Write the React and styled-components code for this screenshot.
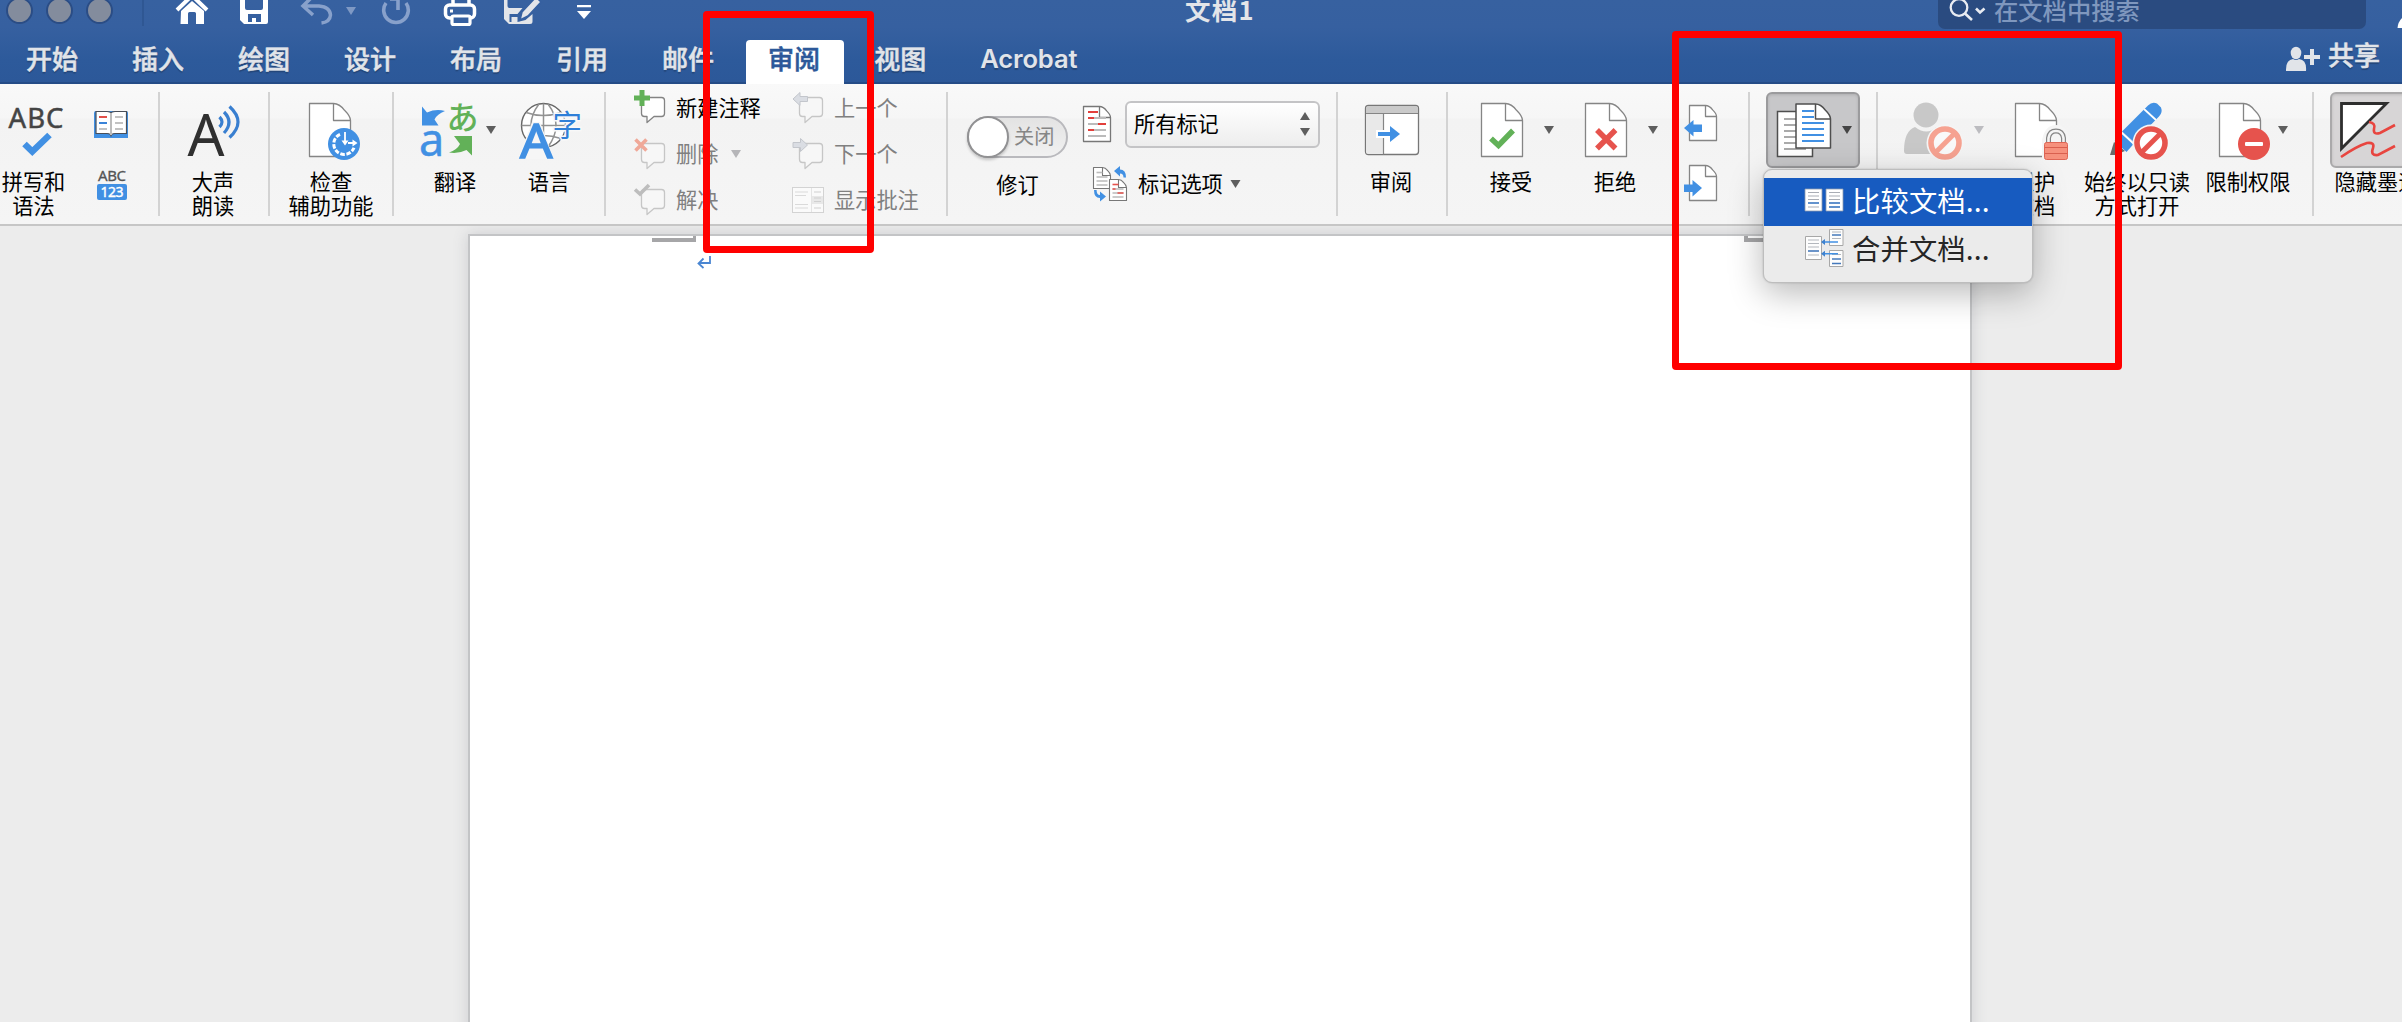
import React from "react";
import styled, { createGlobalStyle, css } from "styled-components";

const BLUE = "#4190e3";
const GREEN = "#62b158";
const RED = "#e6534d";

const GlobalStyle = createGlobalStyle`
  * { box-sizing: border-box; }
  html, body { margin: 0; padding: 0; }
  body {
    overflow: hidden;
    background: #ececec;
    font-family: "Noto Sans CJK SC", "Noto Sans", sans-serif;
    color: #000;
  }
`;

const Window = styled.div`
  position: relative;
  width: 2402px;
  height: 1022px;
  overflow: hidden;
  display: flex;
  flex-direction: column;
`;

const Header = styled.header`
  flex: none;
  height: 84px;
  background: linear-gradient(#3761a0 0, #3660a0 27px, #2d5a9b 60px, #2c5899 100%);
  border-bottom: 2px solid #254c87;
`;

const TitleBar = styled.div`
  display: flex;
  align-items: center;
  height: 36px;
  margin-top: -8px;
`;

const Lights = styled.div`
  display: flex;
  gap: 13px;
  padding-left: 6px;
  width: 142px;
`;

const Light = styled.span`
  width: 27px;
  height: 27px;
  border-radius: 50%;
  background: #838c9d;
  border: 2px solid #2b4d85;
`;

const TitleDivider = styled.span`
  width: 2px;
  height: 32px;
  background: #2f5793;
`;

const QuickAccess = styled.div`
  display: flex;
  width: 1041px;
`;

const Title = styled.h1`
  margin: 0;
  width: 753px;
  font-size: 25.5px;
  line-height: 36px;
  font-weight: 700;
  color: #e3e5e9;
  letter-spacing: 1.2px;
  transform: translateY(-1px);
`;

const Search = styled.div`
  display: flex;
  align-items: center;
  width: 428px;
  height: 37px;
  border-radius: 0 0 7px 7px;
  background: #2a4b80;
  color: #7f97be;
  font-size: 24.3px;
  line-height: 36px;
  font-weight: 500;
`;

const Svg = styled.svg`
  display: block;
  flex: none;
  overflow: visible;
`;

const TabBar = styled.nav`
  display: flex;
  align-items: flex-start;
  height: 54px;
  margin-left: -1px;
  padding-top: 12px;
`;

const Tab = styled.a`
  display: block;
  height: 44px;
  margin: 0 3px 0 5px;
  padding: 0 24px 0 22px;
  font-size: 26px;
  line-height: 35px;
  font-weight: 500;
  color: #e1e4e9;
  -webkit-text-stroke: 0.5px currentColor;
  text-shadow: 0 2px 1px rgba(0, 0, 0, 0.22);
  ${(p) => p.$latin && css`
    font-family: Inter, "Noto Sans", sans-serif;
    font-size: 25.5px;
    font-weight: 600;
    line-height: 38px;
    letter-spacing: -0.1px;
    -webkit-text-stroke: 0;
  `}
  ${(p) => p.$active && css`
    background: #fff;
    color: #2c5899;
    font-weight: 500;
    text-shadow: none;
    border-radius: 4px 4px 0 0;
  `}
`;

const Share = styled.button`
  display: flex;
  align-items: center;
  margin: -4px 22px 0 auto;
  padding: 0;
  border: 0;
  background: none;
  font: 500 26px/36px "Noto Sans CJK SC", sans-serif;
  color: #e1e4e9;
  -webkit-text-stroke: 0.5px currentColor;
  text-shadow: 0 2px 1px rgba(0, 0, 0, 0.22);
`;

const Ribbon = styled.section`
  position: relative;
  z-index: 2;
  flex: none;
  display: flex;
  height: 142px;
  background: linear-gradient(#f9f9f9 0, #f6f6f6 34px, #f3f3f3 35px, #f5f5f5 100%);
  border-bottom: 2px solid #c6c6c6;
`;

const Group = styled.div`
  position: relative;
  flex: none;
  display: flex;
  width: ${(p) => p.$w + 2}px;
  padding-top: ${(p) => p.$top ?? 8}px;
  padding-left: ${(p) => p.$left ?? 0}px;
  &::after {
    content: "";
    position: absolute;
    top: 8px;
    right: 0;
    width: 2px;
    height: 124px;
    background: ${(p) => (p.$last ? "none" : "#d3d3d3")};
  }
`;

const BigButton = styled.div`
  flex: none;
  display: flex;
  flex-direction: column;
  align-items: center;
  width: ${(p) => p.$w}px;
`;

const Label = styled.span`
  margin-top: -1px;
  font-size: 21.2px;
  line-height: 24px;
  text-align: center;
  white-space: pre;
  color: ${(p) => (p.$dim ? "#808080" : "#000")};
`;

const RowLabel = styled(Label)`
  margin-top: -2px;
`;

const Stack = styled.div`
  display: flex;
  flex-direction: column;
  padding-left: ${(p) => p.$left ?? 0}px;
  width: ${(p) => p.$w}px;
  gap: ${(p) => p.$gap ?? 0}px;
`;

const CommandRow = styled.div`
  display: flex;
  align-items: center;
  gap: ${(p) => p.$gap ?? 8}px;
  height: 46px;
`;

const TrackTop = styled(CommandRow)`
  margin: 9px 0 15px -7px;
`;

const TrackBottom = styled(CommandRow)`
  margin-top: -1px;
`;

const Pressed = styled.div`
  flex: none;
  width: 94px;
  height: 76px;
  border: 2px solid ${(p) => (p.$light ? "#aaa9aa" : "#9b9b9d")};
  border-radius: 6px;
  background: ${(p) => (p.$light ? "#d7d5d6" : "#c7c7c9")};
  box-shadow: inset 0 1px 3px rgba(0, 0, 0, 0.12);
`;

const PressedIcon = styled(Svg)`
  margin: -2px;
`;

const InkLabel = styled(Label)`
  margin-top: 1px;
`;

const Toggle = styled.div`
  display: flex;
  align-items: center;
  width: 101px;
  height: 42px;
  margin: 24px 0 15px;
  border: 2px solid #b9b9bd;
  border-radius: 21px;
  background: linear-gradient(#e3e3e3, #f1f1f1);
  font-size: 20.2px;
  line-height: 36px;
  color: #868686;
`;

const ToggleText = styled.span`
  margin-top: -2px;
`;

const Knob = styled.span`
  width: 42px;
  height: 42px;
  margin: 0 5px 0 -2px;
  border-radius: 50%;
  border: 2px solid #919193;
  background: #fff;
  box-shadow: 0 2px 3px rgba(0, 0, 0, 0.2);
`;

const Select = styled.div`
  display: flex;
  align-items: center;
  justify-content: space-between;
  width: 195px;
  height: 47px;
  padding: 0 5px 0 7px;
  border: 2px solid #c4c4c6;
  border-radius: 6px;
  background: linear-gradient(#fff, #ededed);
`;

const Menu = styled.div`
  position: absolute;
  z-index: 5;
  left: 13px;
  top: 85px;
  width: 270px;
  height: 114px;
  padding: 8px 0;
  border: 1px solid #bdbdbd;
  border-radius: 9px;
  background: #ebebeb;
  box-shadow: 0 10px 34px rgba(0, 0, 0, 0.28), 0 0 2px rgba(0, 0, 0, 0.2);
`;

const MenuItem = styled.div`
  display: flex;
  align-items: center;
  gap: 7px;
  height: 48px;
  padding-left: 40px;
  font-size: 28.3px;
  line-height: 44px;
  white-space: nowrap;
  color: ${(p) => (p.$active ? "#fff" : "#262626")};
  background: ${(p) => (p.$active ? "#175bc0" : "transparent")};
`;

const MenuText = styled.span`
  margin-top: -4px;
  letter-spacing: 0.15px;
`;

const Workspace = styled.main`
  flex: 1;
  display: flex;
  justify-content: center;
  padding: 8px 0 0 38px;
  background: #ececec;
`;

const Page = styled.article`
  width: 1504px;
  height: 820px;
  border: 2px solid #c3c4c6;
  background: #fff;
  box-shadow: 0 0 14px rgba(90, 96, 108, 0.22);
`;

const Highlight = styled.div`
  position: absolute;
  z-index: 10;
  left: ${(p) => p.$x}px;
  top: ${(p) => p.$y}px;
  width: ${(p) => p.$w}px;
  height: ${(p) => p.$h}px;
  border: 7px solid #f00;
  border-radius: 4px;
`;

/* Every drawing keeps one shared coordinate space: the viewBox names the region it covers. */
function Art({ x, y, w, h, as: Tag = Svg, children }) {
  return (
    <Tag width={w} height={h} viewBox={`${x} ${y} ${w} ${h}`} fill="none">
      {children}
    </Tag>
  );
}

const Down = ({ x, y, color = "#5e5e5e" }) => (
  <path d={`M${x} ${y}h10l-5 8z`} fill={color} />
);

const Sheet = ({ x, y, w, h, f, stroke = "#858585", sw = 1.3 }) => (
  <g stroke={stroke} strokeWidth={sw} strokeLinejoin="round">
    <path d={`M${x} ${y}h${w - f}q${f * 0.35} 0 ${f * 0.65} ${f * 0.4}q${f * 0.35} ${f * 0.35} ${f * 0.35} ${f * 0.6}v${h - f}h${-w}z`} fill="#fff" />
    <path d={`M${x + w - f} ${y}v${f}h${f}`} />
  </g>
);

const Bubble = ({ dx = 0, dy = 0, color = "#838383", fill = "#fff" }) => (
  <path
    transform={`translate(${dx} ${dy})`}
    d="M644.5 97.5h17q3 0 3 3v13q0 3-3 3h-7.5l-7 6v-6h-2.500q-3 0-3-3v-13q0-3 3-3z"
    fill={fill}
    stroke={color}
    strokeWidth="1.3"
    strokeLinejoin="round"
  />
);

const Lines = ({ x, w, ys, color = "#c2c2c2", sw = 1.6 }) => (
  <path d={ys.map((y) => `M${x} ${y}h${w}`).join("")} stroke={color} strokeWidth={sw} />
);

const Forbidden = ({ x, y, color, fill = "#fff", halo = "#f5f5f5" }) => (
  <g>
    <circle cx={x} cy={y} r="18.500" fill={halo} />
    <circle cx={x} cy={y} r="14" fill={fill} stroke={color} strokeWidth="5.600" />
    <path d={`M${x - 9} ${y + 9}l18-18`} stroke={color} strokeWidth="5" />
  </g>
);

const Big = ({ x, w, label, children }) => (
  <BigButton $w={w}>
    <Art x={x} y={92} w={w} h={78}>{children}</Art>
    {label && <Label>{label}</Label>}
  </BigButton>
);

const TABS = ["开始", "插入", "绘图", "设计", "布局", "引用", "邮件", "审阅", "视图", "Acrobat"];

function WindowHeader() {
  return (
    <Header>
      <TitleBar>
        <Lights><Light /><Light /><Light /></Lights>
        <TitleDivider />
        <QuickAccess>
          <Art x={144} y={-8} w={80} h={36}>
            <path d="M177 10L192-4.500L207 10" stroke="#fff" strokeWidth="4" />
            <path d="M181 11L192 1l12 10v13h-8V13.500q0-1.500-1.500-1.500h-5q-1.500 0-1.500 1.500V24h-7.500z" fill="#fff" />
          </Art>
          <Art x={224} y={-8} w={66} h={36}>
            <path d="M240-8h28V22q0 2-2 2h-22l-4-4zM245-8v16q0 2 2 2h14q2 0 2-2V-8zM248 14v8h4v-4h4v4h5v-8z" fill="#fff" fillRule="evenodd" />
          </Art>
          <Art x={290} y={-8} w={78} h={36}>
            <path d="M313-4L303 6l10 9M304 6h15q11 1 11.500 9q-.5 7-9 8" stroke="#88a1cb" strokeWidth="3.500" />
            <Down x={346} y={7} color="#7f99c4" />
          </Art>
          <Art x={368} y={-8} w={62} h={36}>
            <path d="M386 3a12.300 12.300 0 1 0 20 0M398-2V10M390-1h9" stroke="#88a1cb" strokeWidth="3.600" />
          </Art>
          <Art x={430} y={-8} w={62} h={36}>
            <path d="M453 4V-8M469 4V-8" stroke="#fff" strokeWidth="3.500" />
            <rect x="445.500" y="5" width="29" height="13" rx="4" stroke="#fff" strokeWidth="3.500" />
            <rect x="452" y="16" width="18" height="8.500" rx="1.500" fill="#3660a0" stroke="#fff" strokeWidth="3.200" />
            <rect x="450" y="9.500" width="3" height="3" fill="#fff" />
          </Art>
          <Art x={492} y={-8} w={70} h={36}>
            <path d="M504-8V19l5 5h21q2.500 0 2.500-2.500V14l-7 6-8 2V17h-6v5h-2v-8h8l5-6h-13q-2 0-2-2V-8z" fill="#e3e5e9" />
            <path d="M520 20l2-8L536-3l5 5-13 14z" fill="#e3e5e9" stroke="#3660a0" strokeWidth="1.500" />
          </Art>
          <Art x={562} y={-8} w={40} h={36}>
            <path d="M577 5h14v2.300h-14zM577 11h14l-7 8z" fill="#fff" />
          </Art>
        </QuickAccess>
        <Title>文档1</Title>
        <Search>
          <Art x={1938} y={-8} w={56} h={36}>
            <circle cx="1959" cy="7.500" r="8.300" stroke="#e8ebf1" strokeWidth="2.300" />
            <path d="M1965 13.500l7 6.500M1976 8.500l4 4 4.500-4" stroke="#e8ebf1" strokeWidth="2.600" />
          </Art>
          在文档中搜索
        </Search>
        <Art x={2366} y={-8} w={36} h={36}>
          <path d="M2402 18q-4 4-4.500 10h8z" fill="#fff" />
        </Art>
      </TitleBar>
      <TabBar>
        {TABS.map((t) => (
          <Tab key={t} $active={t === "审阅"} $latin={t === "Acrobat"}>{t}</Tab>
        ))}
        <Share>
          <Art x={2285} y={36} w={43} h={36}>
            <ellipse cx="2296" cy="53" rx="5.300" ry="6.200" fill="#e1e4e9" />
            <path d="M2286 71q-.5-11 7-12q3 2 6 0q8 1 7 12zM2310 49h4v6h6v4h-6v6h-4v-6h-6v-4h6z" fill="#e1e4e9" />
          </Art>
          共享
        </Share>
      </TabBar>
    </Header>
  );
}

function Proofing() {
  return (
    <Group $w={158}>
      <Big x={0} w={67} label={"拼写和\n语法"}>
        <text x="8.500" y="128" fontFamily="Noto Sans" fontSize="27.500" textLength="55" fill="#444" stroke="#444" strokeWidth=".5">ABC</text>
        <path d="M24.500 144l7.800 7.500L49.500 135" stroke={BLUE} strokeWidth="6.500" />
      </Big>
      <Stack $w={91} $left={23} $gap={18}>
        <Art x={90} y={92} w={44} h={50}>
          <path d="M94 113q0-2 2-2h30q2 0 2 2v25H94z" fill={BLUE} />
          <path d="M96 111.500h11q4 0 4 2.500q0-2.500 4-2.500h11.500v22H115q-4 0-4 3q0-3-4-3H96z" fill="#fff" stroke="#4a4f58" strokeWidth="1.200" />
          <path d="M111 113v22" stroke="#bcbcbc" strokeWidth="2" />
          <Lines x={99} w={8} ys={[117]} color="#e2504a" sw={2} />
          <Lines x={99} w={8} ys={[123]} color="#3a83d8" sw={2} />
          <Lines x={99} w={8} ys={[129]} sw={2} />
          <Lines x={115} w={8} ys={[117, 123, 129]} sw={2} />
        </Art>
        <Art x={90} y={160} w={44} h={50}>
          <text x="98" y="181" fontFamily="Noto Sans" fontSize="15" textLength="28" fill="#555" stroke="#555" strokeWidth=".3">ABC</text>
          <rect x="97" y="184" width="30" height="16" rx="2" fill={BLUE} />
          <text x="100.500" y="197.300" fontFamily="Noto Sans" fontSize="14" textLength="23" fill="#fff" stroke="#fff" strokeWidth=".4">123</text>
        </Art>
      </Stack>
    </Group>
  );
}

function Comments() {
  return (
    <Group $w={340} $top={1} $left={26}>
      <Stack $w={158}>
        <CommandRow>
          <Art x={632} y={85} w={36} h={46}>
            <Bubble />
            <path d="M634 95.500h5.500v-5.500h5v5.500h5.500v5h-5.500v5.500h-5v-5.500H634z" fill={GREEN} />
          </Art>
          <RowLabel>新建注释</RowLabel>
        </CommandRow>
        <CommandRow>
          <Art x={632} y={131} w={36} h={46}>
            <Bubble dy={46} color="#c6c6c6" fill="#f7f7f7" />
            <path d="M635.500 139.500l11 11M646.500 139.500l-11 11" stroke="#f0a898" strokeWidth="3.600" />
          </Art>
          <RowLabel $dim>删除</RowLabel>
          <Art x={726} y={131} w={16} h={46}><Down x={731} y={150} color="#b5b5b8" /></Art>
        </CommandRow>
        <CommandRow>
          <Art x={632} y={177} w={36} h={46}>
            <Bubble dy={92} color="#c6c6c6" fill="#f7f7f7" />
            <path d="M635 189.500l5 4.500 9-9" stroke="#bdbdbd" strokeWidth="3.600" />
          </Art>
          <RowLabel $dim>解决</RowLabel>
        </CommandRow>
      </Stack>
      <Stack $w={156}>
        <CommandRow>
          <Art x={790} y={85} w={36} h={46}>
            <Bubble dx={158} color="#c6c6c6" fill="#f7f7f7" />
            <path d="M793 99l7-6.500v4h7.500v5H800v4z" fill="#dadde3" stroke="#c3c6cc" />
          </Art>
          <RowLabel $dim>上一个</RowLabel>
        </CommandRow>
        <CommandRow>
          <Art x={790} y={131} w={36} h={46}>
            <Bubble dx={158} dy={46} color="#c6c6c6" fill="#f7f7f7" />
            <path d="M807.500 145l-7-6.500v4h-7.500v5h7.500v4z" fill="#dadde3" stroke="#c3c6cc" />
          </Art>
          <RowLabel $dim>下一个</RowLabel>
        </CommandRow>
        <CommandRow>
          <Art x={790} y={177} w={36} h={46}>
            <rect x="792.500" y="187.500" width="31" height="25" fill="#fafafa" stroke="#d3d3d3" />
            <rect x="811" y="196" width="12" height="8" fill="#e8e8e8" />
            <path d="M811.500 188v24" stroke="#e4e4e4" />
            <Lines x={795} w={13} ys={[192, 204.5, 208]} color="#dadada" sw={1} />
            <Lines x={795} w={11} ys={[195.5]} color="#dadada" sw={1} />
            <Lines x={814} w={7} ys={[192, 198, 201.5, 208]} color="#d0d0d0" sw={1} />
          </Art>
          <RowLabel $dim>显示批注</RowLabel>
        </CommandRow>
      </Stack>
    </Group>
  );
}

function MarkupSheet({ x, y, red }) {
  return (
    <g>
      <Sheet x={x} y={y} w={17} h={21} f={8} sw={1.1} stroke="#777" />
      <Lines x={x + 3} w={6} ys={[y + 5]} color={red ? RED : "#bbb"} />
      <Lines x={x + 3} w={11} ys={[y + 9.5, y + 13.5, y + 17.5]} color="#bbb" />
      {red && <path d={`M${x + 3} ${y + 9.5}h3M${x + 8} ${y + 13.5}h6`} stroke={RED} strokeWidth="1.600" />}
    </g>
  );
}

function Tracking() {
  return (
    <Group $w={388}>
      <BigButton $w={139}>
        <Toggle><Knob /><ToggleText>关闭</ToggleText></Toggle>
        <Label>修订</Label>
      </BigButton>
      <Stack $w={249}>
        <TrackTop $gap={9}>
          <Art x={1080} y={100} w={36} h={46}>
            <Sheet x={1083.5} y={105.5} w={27} h={35} f={11} stroke="#777" />
            <Lines x={1088} w={18} ys={[117, 123, 129, 135]} color="#bbb" sw={1.8} />
            <path d="M1088 111h10M1088 117h6M1098 123h8M1088 129h6" stroke="#e23f3b" strokeWidth="2" />
          </Art>
          <Select>
            <RowLabel>所有标记</RowLabel>
            <Art x={1299} y={108} w={16} h={32}>
              <path d="M1302 120h10l-5-8z" fill="#5e5e5e" />
              <Down x={1302} y={128} />
            </Art>
          </Select>
        </TrackTop>
        <TrackBottom $gap={7}>
          <Art x={1087} y={161} w={44} h={46}>
            <MarkupSheet x={1093.5} y={167.5} />
            <MarkupSheet x={1109.5} y={179.5} red />
            <path d="M1114 171l6-5v3.500q6 0 6 8h-2.500q0-4-3.500-4v3z" fill={BLUE} />
            <path d="M1094 190h2.600q0 5 3.400 5v-3.500l6 5-6 5v-3.500q-6 0-6-8z" fill={BLUE} />
          </Art>
          <RowLabel>标记选项</RowLabel>
          <Art x={1230} y={161} w={16} h={46}><Down x={1230.5} y={180} /></Art>
        </TrackBottom>
      </Stack>
    </Group>
  );
}

function Changes() {
  return (
    <Group $w={300}>
      <Big x={1448} w={126} label="接受">
        <Sheet x={1481.5} y={103.5} w={41} h={53} f={17} />
        <path d="M1491 138.500l7.500 7 14.500-15" stroke={GREEN} strokeWidth="5.500" />
        <Down x={1544} y={126} />
      </Big>
      <Big x={1574} w={82} label="拒绝">
        <Sheet x={1585.5} y={103.5} w={41} h={53} f={17} />
        <path d="M1597 130l18.500 18.500M1615.500 130L1597 148.500" stroke={RED} strokeWidth="5.500" />
        <Down x={1648} y={126} />
      </Big>
      <Stack $w={92} $left={24} $gap={10}>
        <Art x={1680} y={92} w={40} h={50}>
          <Sheet x={1689.5} y={105.5} w={27} h={35} f={11} />
          <path d="M1684 128l9.500-8v4.500h8.500v7.500h-8.500v4.500z" fill={BLUE} />
        </Art>
        <Art x={1680} y={152} w={40} h={50}>
          <Sheet x={1689.5} y={165.5} w={27} h={35} f={11} />
          <path d="M1702 188l-9.500-8v4.500h-8.500v7.500h8.500v4.500z" fill={BLUE} />
        </Art>
      </Stack>
    </Group>
  );
}

function Compare() {
  return (
    <Group $w={126} $left={16}>
      <Pressed>
        <Art as={PressedIcon} x={1766} y={92} w={94} h={76}>
          <path d="M1777.500 111.500h35v45h-35z" fill="#fff" stroke="#4f4f4f" strokeWidth="1.500" />
          <Lines x={1784} w={22} ys={[119, 125, 131, 137, 143, 149]} color="#8e8e8e" />
          <Sheet x={1796} y={104} w={34.5} h={44} f={15} stroke="#4f4f4f" sw={1.5} />
          <Lines x={1802} w={12} ys={[111, 117]} color={BLUE} sw={2} />
          <Lines x={1802} w={22} ys={[123, 129, 135, 141]} color={BLUE} sw={2} />
          <Down x={1842} y={126} color="#444" />
        </Art>
      </Pressed>
      <Menu>
        <MenuItem $active>
          <Art x={1804} y={178} w={41} h={48}>
            <path d="M1805 189h17v22h-17zM1826 189h17v22h-17z" fill="#fff" stroke="#8d99ad" strokeWidth=".8" />
            <Lines x={1808} w={11} ys={[192.5, 196, 199.5, 207]} color="#a9adb5" sw={1.2} />
            <Lines x={1829} w={11} ys={[192.5, 196, 199.5]} color="#a9adb5" sw={1.2} />
            <Lines x={1808} w={11} ys={[203]} color="#2f6fbd" sw={1.5} />
            <Lines x={1829} w={11} ys={[203, 207]} color="#2f6fbd" sw={1.5} />
          </Art>
          <MenuText>比较文档...</MenuText>
        </MenuItem>
        <MenuItem>
          <Art x={1804} y={226} w={41} h={48}>
            <path d="M1805.500 236.500h16v23h-16zM1829.500 229.500h13.500v16h-13.500zM1829.500 250.500h13.500v16h-13.500z" fill="#fdfdfd" stroke="#a7a7a7" />
            <Lines x={1808} w={11} ys={[240, 243.5, 247, 255]} color="#b3b7bd" sw={1.2} />
            <Lines x={1808} w={11} ys={[251]} color="#4579bb" sw={1.6} />
            <Lines x={1832} w={9} ys={[232, 238.5, 254.5]} color="#b3b7bd" sw={1.2} />
            <Lines x={1832} w={9} ys={[235, 259, 263.5]} color="#4579bb" sw={1.6} />
            <path d="M1838 242h-14M1838 253.700h-14" stroke={BLUE} strokeWidth="1.500" />
            <path d="M1821 242l4-3v6zM1821 253.700l4-3v6z" fill="#3f82cf" />
          </Art>
          <MenuText>合并文档...</MenuText>
        </MenuItem>
      </Menu>
    </Group>
  );
}

function Protect() {
  return (
    <Group $w={434}>
      <Big x={1878} w={112}>
        <circle cx="1926" cy="115" r="12.500" fill="#c8c8c8" />
        <path d="M1904 151q0-20 11-24q12 9 21 0q8 6 8 27h-37q-3 0-3-3z" fill="#c8c8c8" />
        <Forbidden x={1945} y={143} color="#f6a291" fill="#f9f9f9" />
        <Down x={1974} y={126} color="#bcbcc0" />
      </Big>
      <Big x={1990} w={88} label={"保护\n文档"}>
        <Sheet x={2015.5} y={103.5} w={41} h={53} f={17} />
        <path d="M2042 160v-20q3-15 14-15t14 15v20z" fill="#f5f5f5" />
        <path d="M2048.500 143v-5q1-7 7.500-7t7.500 7v5" stroke="#858585" strokeWidth="5" />
        <path d="M2048.500 143v-5q1-7 7.500-7t7.500 7v5" stroke="#f4f4f4" strokeWidth="2.600" />
        <rect x="2044.500" y="142.500" width="23" height="17" rx="2" fill="#f6917d" stroke="#df6655" />
        <path d="M2045 147.500h22M2045 153.500h22" stroke="#d9604f" />
      </Big>
      <Big x={2078} w={118} label={"始终以只读\n方式打开"}>
        <path d="M2110 155l4-13 11 9-10 4z" fill="#6b6b6b" />
        <path d="M2114.500 141l8-9 12 11-8 9z" fill={BLUE} />
        <path d="M2122 131.500l26-26q4-4 9-2l4 4q2 5-2 9l-25 25.500z" fill={BLUE} />
        <path d="M2144 109l12 11M2121 132l13 12" stroke="#fff" strokeWidth="1.800" />
        <Forbidden x={2151} y={143} color={RED} />
      </Big>
      <Big x={2196} w={104} label="限制权限">
        <Sheet x={2219.5} y={103.5} w={41} h={53} f={17} />
        <circle cx="2254" cy="144" r="16" fill={RED} />
        <rect x="2245" y="142" width="18" height="4" rx="1" fill="#fff" />
        <Down x={2278} y={126} />
      </Big>
    </Group>
  );
}

function RibbonBar() {
  return (
    <Ribbon>
      <Proofing />
      <Group $w={108}>
        <Big x={160} w={106} label={"大声\n朗读"}>
          <text x="187.500" y="156" fontFamily="Noto Sans" fontSize="59" textLength="37" lengthAdjust="spacingAndGlyphs" fill="#303030">A</text>
          <path d="M219.500 117q5 5 0 10M224 112q10 10 0 21M229.500 106.500q17 15.500 0 31" stroke="#397fd0" strokeWidth="3.200" />
        </Big>
      </Group>
      <Group $w={122}>
        <Big x={270} w={122} label={"检查\n辅助功能"}>
          <Sheet x={309.5} y={103.5} w={41} h={53} f={17} />
          <circle cx="344" cy="144" r="16" fill={BLUE} />
          <path d="M340 134.300a10.500 10.500 0 1 0 14 13.500" stroke="#fff" strokeWidth="3" strokeDasharray="4.500 1.600" />
          <path d="M345 132v11M348 143h6" stroke="#fff" strokeWidth="1.800" />
          <path d="M341.500 140.500h7l-3.500 5zM352.500 139.500v7l5-3.500z" fill="#fff" />
        </Big>
      </Group>
      <Group $w={210}>
        <Big x={394} w={122} label="翻译">
          <path d="M422 106.500l5 6q9-4 18-1.500q-8 3-10.500 8.500l4 6H422z" fill={BLUE} />
          <path d="M454 136h18v19.500l-5.500-5.500q-8 4-17.500 2.500q8-2.500 11-8.500z" fill={GREEN} />
          <text x="419" y="155.500" fontFamily="Noto Sans" fontSize="45" fill={BLUE} stroke={BLUE} strokeWidth=".5">a</text>
          <text x="446.500" y="128.500" fontFamily="Noto Sans CJK JP" fontSize="32" fontWeight="500" fill={GREEN}>あ</text>
          <Down x={486} y={126} />
        </Big>
        <Big x={516} w={66} label="语言">
          <circle cx="543.500" cy="125.500" r="22" fill="#fff" stroke="#666" strokeWidth="1.400" />
          <path d="M521.500 125.500h44M526 112.500q17 6 35 0M526 138.500q17-6 35 0M543.500 103.500v44M539 104q-16 21 0 43M548 104q16 21 0 43" stroke="#929292" strokeWidth="1.500" />
          <path d="M518 159l14-37h8l14 37z" fill="#f6f6f6" />
          <text x="520" y="157.500" fontFamily="Noto Sans" fontSize="47" textLength="32.500" lengthAdjust="spacingAndGlyphs" fill={BLUE} stroke={BLUE} strokeWidth="1.500">A</text>
          <text x="552.500" y="135.500" fontFamily="Noto Sans CJK SC" fontSize="29.500" fill="#2f7fd8" stroke="#f8f8f8" strokeWidth="3" paintOrder="stroke">字</text>
        </Big>
      </Group>
      <Comments />
      <Tracking />
      <Group $w={108}>
        <Big x={1338} w={106} label="审阅">
          <rect x="1365.500" y="105.500" width="53" height="49" rx="3" fill="#fff" stroke="#777" strokeWidth="1.300" />
          <path d="M1366 113V108.500q0-2.500 2.500-2.500h47q2.500 0 2.500 2.500V113z" fill="#cacaca" />
          <path d="M1366 114h17v40h-14.500q-2.500 0-2.500-2.500z" fill="#e9e9e9" />
          <path d="M1366 113.500h52M1383.500 113.500v41" stroke="#858585" strokeWidth="1.200" />
          <path d="M1378 132h12v-6l10 8-10 8v-6h-12z" fill={BLUE} stroke="#fff" strokeWidth="4" paintOrder="stroke" />
        </Big>
      </Group>
      <Changes />
      <Compare />
      <Protect />
      <Group $w={110} $left={16} $last>
        <BigButton $w={94}>
          <Pressed $light>
            <Art as={PressedIcon} x={2330} y={92} w={94} h={76}>
              <path d="M2341.500 103.500h45l-45 45z" fill="#fff" stroke="#2e2e2e" strokeWidth="2.800" />
              <path d="M2369 122q7 1 5 7q-1 6 6 4l15-8M2341 157q16-11 26-14q8-1 6 5q-3 8 5 7l17-9" stroke="#e8453f" strokeWidth="2.600" />
            </Art>
          </Pressed>
          <InkLabel>隐藏墨迹</InkLabel>
        </BigButton>
      </Group>
    </Ribbon>
  );
}

export default function App() {
  return (
    <Window>
      <GlobalStyle />
      <WindowHeader />
      <RibbonBar />
      <Workspace>
        <Page>
          <Art x={470} y={236} w={1500} h={40}>
            <path d="M652 238h41v-2h3v6h-44zM1744 236h4v2h50v4h-54z" fill="#a6a6a8" />
            <path d="M710 256v7h-11M703.500 258.500l-5 5 5 4.500" stroke="#4a86d2" strokeWidth="1.800" />
          </Art>
        </Page>
      </Workspace>
      <Highlight $x={703} $y={11} $w={171} $h={242} />
      <Highlight $x={1672} $y={31} $w={450} $h={339} />
    </Window>
  );
}
